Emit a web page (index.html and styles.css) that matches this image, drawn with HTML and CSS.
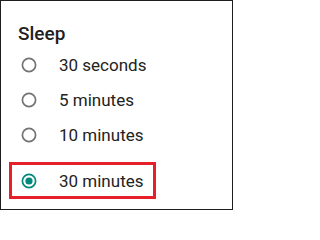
FILE: index.html
```html
<!DOCTYPE html>
<html>
<head>
<meta charset="utf-8">
<link rel="stylesheet" href="styles.css">
</head>
<body>
<div class="frame">
  <h1 class="title">Sleep</h1>
  <div class="options">
    <div class="option">
      <svg class="radio" width="16" height="16" viewBox="0 0 16 16"><circle cx="8" cy="8" r="6.6" fill="none" stroke="#737373" stroke-width="1.7"/></svg>
      <span class="label">30 seconds</span>
    </div>
    <div class="option">
      <svg class="radio" width="16" height="16" viewBox="0 0 16 16"><circle cx="8" cy="8" r="6.6" fill="none" stroke="#737373" stroke-width="1.7"/></svg>
      <span class="label">5 minutes</span>
    </div>
    <div class="option">
      <svg class="radio" width="16" height="16" viewBox="0 0 16 16"><circle cx="8" cy="8" r="6.6" fill="none" stroke="#737373" stroke-width="1.7"/></svg>
      <span class="label">10 minutes</span>
    </div>
    <div class="option selected">
      <svg class="radio" width="16" height="16" viewBox="0 0 16 16"><circle cx="8" cy="8" r="6.6" fill="none" stroke="#00897b" stroke-width="1.7"/><circle cx="8" cy="8" r="3.6" fill="#00897b"/></svg>
      <span class="label">30 minutes</span>
    </div>
  </div>
</div>
</body>
</html>
```

FILE: styles.css
```css
html, body {
  margin: 0;
  padding: 0;
  background: #ffffff;
}

.frame {
  width: 233px;
  height: 210px;
  box-sizing: border-box;
  border: 1px solid #1e1e1e;
  padding-top: 21px;
  font-family: Roboto, "Liberation Sans", sans-serif;
  color: #212121;
}

.title {
  margin: 0 0 1px 17px;
  font-size: 19px;
  font-weight: 500;
  line-height: 24px;
  color: #1f1f1f;
}

.options {
  display: flex;
  flex-direction: column;
}

.option {
  display: flex;
  align-items: center;
  height: 35px;
  padding-left: 20px;
  gap: 22px;
}

.radio {
  flex: none;
  display: block;
}

.label {
  font-size: 17px;
  line-height: 20px;
  color: #222222;
}

.option.selected {
  box-sizing: border-box;
  width: 147px;
  height: 37px;
  margin: 10px 0 0 8px;
  padding-left: 9px;
  border: 3px solid #e5202a;
}
```
